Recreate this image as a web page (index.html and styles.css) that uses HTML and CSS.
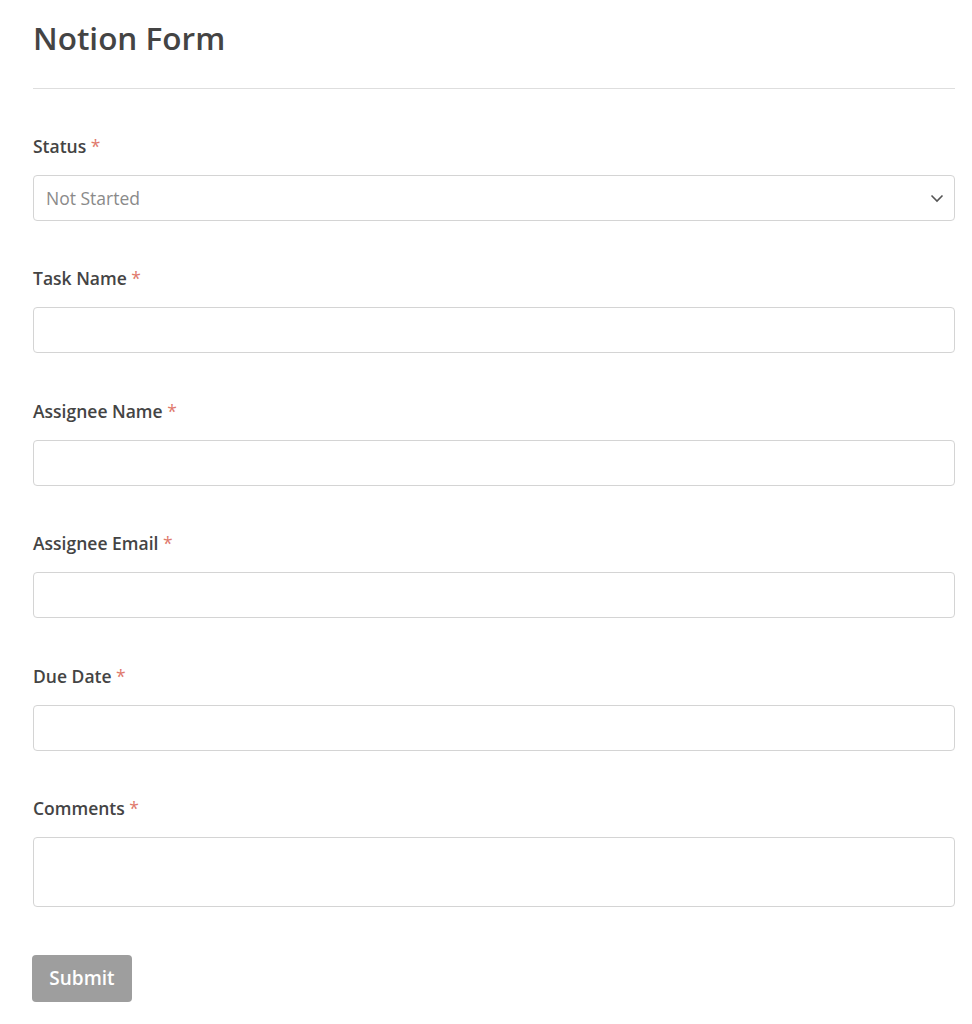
FILE: index.html
```html
<!DOCTYPE html>
<html lang="en">
<head>
<meta charset="utf-8">
<title>Notion Form</title>
<link rel="stylesheet" href="styles.css">
</head>
<body>
<div class="page">
  <header class="header">
    <h1 class="title">Notion Form</h1>
  </header>
  <form class="form">
    <div class="field">
      <label class="label">Status <span class="req">*</span></label>
      <div class="select">
        <span class="placeholder">Not Started</span>
        <svg class="chev" width="14" height="9" viewBox="0 0 14 9"><path d="M1.5 1.5 L7 7 L12.5 1.5" fill="none" stroke="#555" stroke-width="1.6"/></svg>
      </div>
    </div>
    <div class="field">
      <label class="label">Task Name <span class="req">*</span></label>
      <div class="input"></div>
    </div>
    <div class="field">
      <label class="label">Assignee Name <span class="req">*</span></label>
      <div class="input"></div>
    </div>
    <div class="field">
      <label class="label">Assignee Email <span class="req">*</span></label>
      <div class="input"></div>
    </div>
    <div class="field">
      <label class="label">Due Date <span class="req">*</span></label>
      <div class="input"></div>
    </div>
    <div class="field last">
      <label class="label">Comments <span class="req">*</span></label>
      <div class="input textarea"></div>
    </div>
    <div class="actions">
      <button type="button" class="submit">Submit</button>
    </div>
  </form>
</div>
</body>
</html>
```
FILE: styles.css
```css
* { box-sizing: border-box; }
body {
  margin: 0;
  background: #fff;
  font-family: "Open Sans", "Noto Sans", "Liberation Sans", sans-serif;
  color: #444;
}
.page {
  padding: 0 17px 0 33px;
}
.header {
  padding-top: 18px;
  padding-bottom: 30px;
  border-bottom: 1px solid #dedede;
}
.title {
  margin: 0;
  font-size: 31.5px;
  line-height: 40px;
  font-weight: 600;
  color: #444;
}
.form {
  padding-top: 45px;
  display: flex;
  flex-direction: column;
}
.field {
  display: flex;
  flex-direction: column;
  gap: 17px;
  margin-bottom: 45.4px;
}
.label {
  font-size: 17.5px;
  line-height: 24px;
  font-weight: 600;
  color: #444;
}
.req {
  color: #e0796c;
  font-weight: 400;
}
.select, .input {
  height: 46px;
  border: 1px solid #d4d4d4;
  border-radius: 4px;
  background: #fff;
}
.select {
  display: flex;
  align-items: center;
  justify-content: space-between;
  padding: 0 10px 0 12px;
}
.placeholder {
  font-size: 17.5px;
  color: #8a8a8a;
}
.textarea {
  height: 70px;
}
.field.last {
  margin-bottom: 48px;
}
.submit {
  width: 100px;
  height: 47px;
  margin-left: -1px;
  border: 0;
  border-radius: 4px;
  background: #9e9e9e;
  color: #fff;
  font-family: inherit;
  font-size: 19px;
  font-weight: 600;
}
```
